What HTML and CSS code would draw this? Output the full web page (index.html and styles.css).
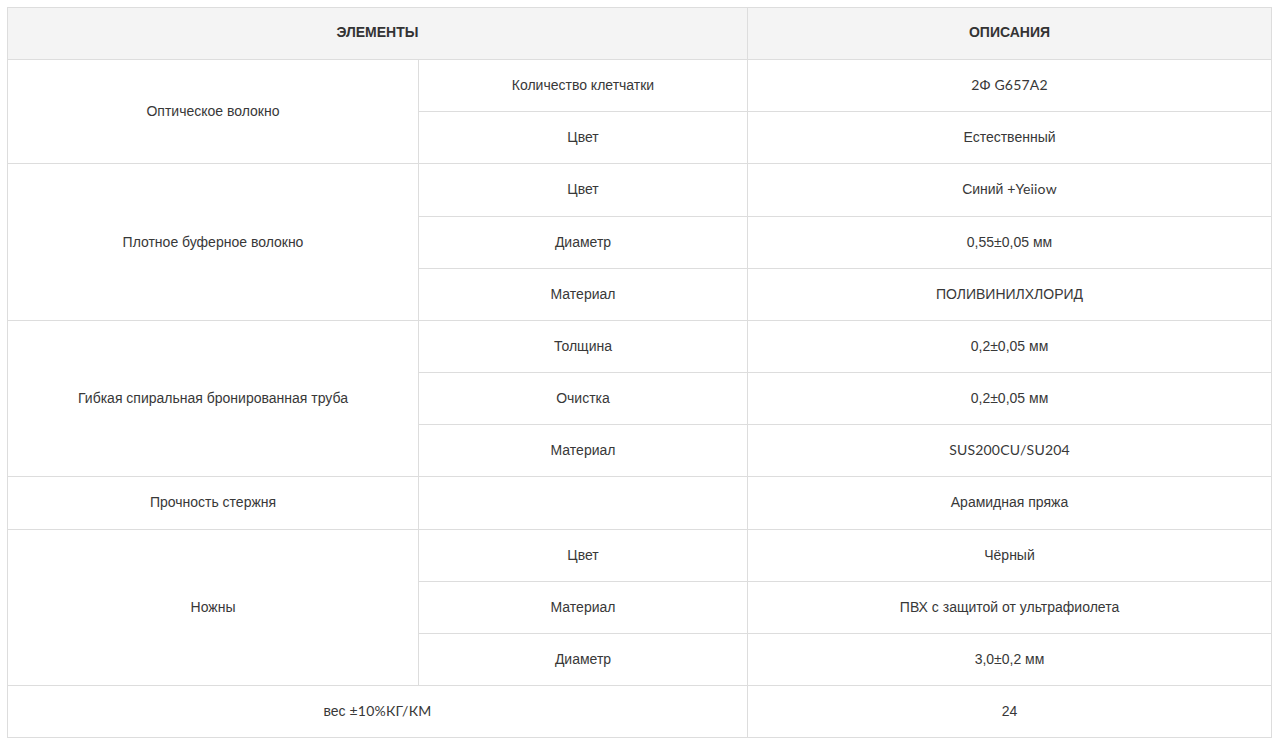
FILE: index.html
```html
<!DOCTYPE html>
<html lang="ru">
<head>
<meta charset="utf-8">
<title>Спецификация</title>
<link rel="stylesheet" href="styles.css">
</head>
<body>
<table class="spec">
  <colgroup>
    <col class="c1">
    <col class="c2">
    <col class="c3">
  </colgroup>
  <thead>
    <tr><th colspan="2">ЭЛЕМЕНТЫ</th><th>ОПИСАНИЯ</th></tr>
  </thead>
  <tbody>
    <tr><td rowspan="2">Оптическое волокно</td><td>Количество клетчатки</td><td><span class="geo">2Ф G657A2</span></td></tr>
    <tr><td>Цвет</td><td>Естественный</td></tr>
    <tr><td rowspan="3">Плотное буферное волокно</td><td>Цвет</td><td>Синий +<span class="geo">Yeiiow</span></td></tr>
    <tr><td>Диаметр</td><td>0,55±0,05 мм</td></tr>
    <tr><td>Материал</td><td>ПОЛИВИНИЛХЛОРИД</td></tr>
    <tr><td rowspan="3">Гибкая спиральная бронированная труба</td><td>Толщина</td><td>0,2±0,05 мм</td></tr>
    <tr><td>Очистка</td><td>0,2±0,05 мм</td></tr>
    <tr><td>Материал</td><td><span class="geo">SUS200CU/SU204</span></td></tr>
    <tr><td>Прочность стержня</td><td></td><td>Арамидная пряжа</td></tr>
    <tr><td rowspan="3">Ножны</td><td>Цвет</td><td>Чёрный</td></tr>
    <tr><td>Материал</td><td>ПВХ с защитой от ультрафиолета</td></tr>
    <tr><td>Диаметр</td><td>3,0±0,2 мм</td></tr>
    <tr><td colspan="2">вес <span class="geo">±10%КГ/КМ</span></td><td>24</td></tr>
  </tbody>
</table>
</body>
</html>
```
FILE: styles.css
```css
html, body {
  background: #ffffff;
}
body {
  margin: 7px 6px 7px 7px;
  font-family: "Liberation Sans", Arial, sans-serif;
  font-size: 14px;
  color: #333333;
}
.spec {
  width: 100%;
  border-collapse: collapse;
  table-layout: fixed;
}
.c1 { width: 411px; }
.c2 { width: 329px; }
.c3 { width: auto; }
.spec th,
.spec td {
  border: 1px solid #dddddd;
  padding: 15px 10px;
  line-height: 21.15px;
  text-align: center;
  vertical-align: middle;
}
.spec th {
  background: #f4f4f4;
  font-size: 14px;
  font-weight: 700;
  color: #333333;
  padding-top: 14px;
  padding-bottom: 16px;
}
.spec td {
  font-size: 14px;
  color: #383838;
}
.geo {
  font-family: Lato, "Liberation Sans", sans-serif;
  letter-spacing: 0.2px;
  line-height: 1;
}
```
